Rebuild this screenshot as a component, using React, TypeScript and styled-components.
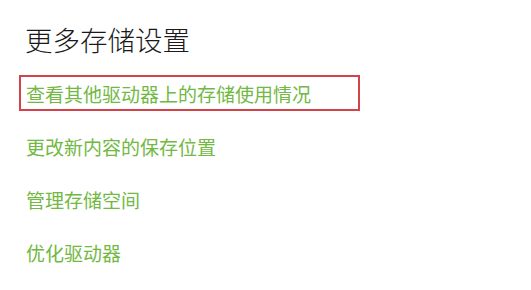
import React from 'react';
import styled, { createGlobalStyle } from 'styled-components';

const GlobalStyle = createGlobalStyle`
  body {
    margin: 0;
    background: #fff;
    font-family: "Noto Sans CJK SC", "Noto Sans", sans-serif;
  }
`

const Page = styled.div`
  padding: 21px 0 0 19px;
  display: flex;
  flex-direction: column;
`

const Title = styled.h2`
  margin: 0 0 18px 6px;
  font-size: 27.5px;
  font-weight: 300;
  line-height: 36px;
  color: #1a1a1a;
`

const LinkList = styled.div`
  display: flex;
  flex-direction: column;
  gap: 17px;
`

const LinkItem = styled.a<{ $highlight?: boolean }>`
  box-sizing: border-box;
  display: flex;
  align-items: center;
  height: 36px;
  width: 341px;
  padding-left: ${p => (p.$highlight ? 5 : 7)}px;
  border: ${p => (p.$highlight ? '2px solid #d4434a' : 'none')};
  font-size: 19px;
  color: #72b843;
  text-decoration: none;
  cursor: pointer;
`

const links = [
  '查看其他驱动器上的存储使用情况',
  '更改新内容的保存位置',
  '管理存储空间',
  '优化驱动器',
];

const App: React.FC = () => {
  return (
    <>
      <GlobalStyle />
      <Page>
        <Title>更多存储设置</Title>
        <LinkList>
          {links.map((label, i) => (
            <LinkItem key={label} $highlight={i === 0}>
              {label}
            </LinkItem>
          ))}
        </LinkList>
      </Page>
    </>
  );
}
export default App;
